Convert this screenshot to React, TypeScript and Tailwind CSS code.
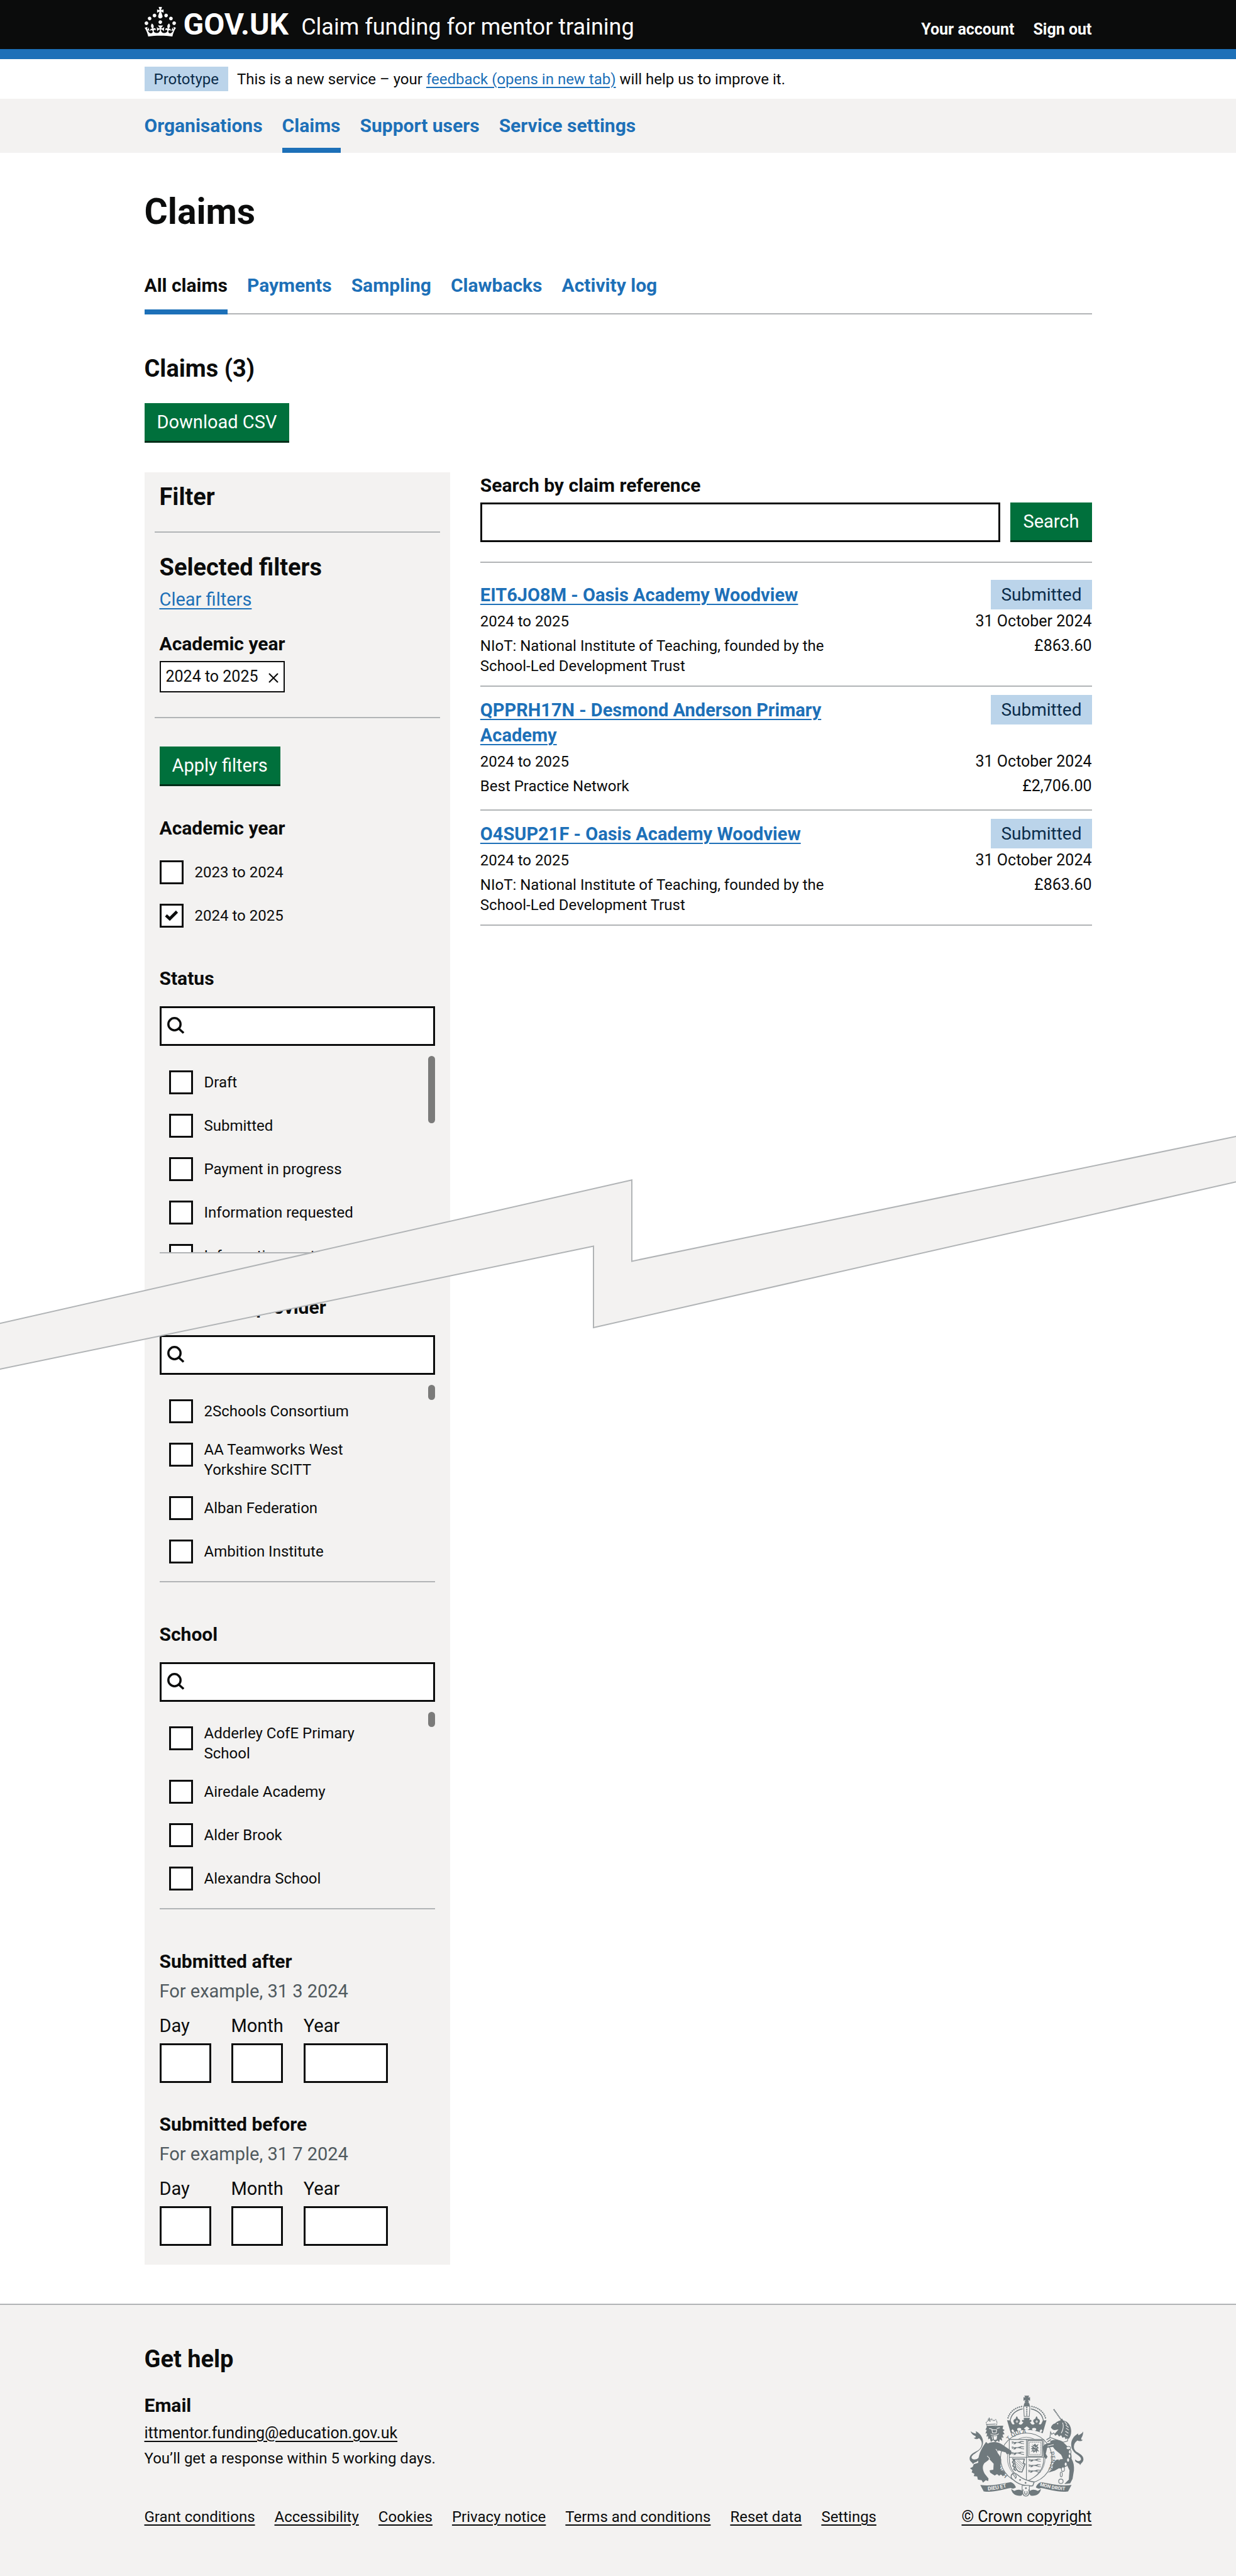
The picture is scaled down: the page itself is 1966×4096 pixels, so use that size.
import React from "react";

const link = "text-[#1d70b8] underline decoration-2 underline-offset-4";
const darkLink = "text-[#0b0c0c] underline decoration-2 underline-offset-4";
const bold30 = "text-[30px] leading-10 font-bold";
const body = "text-[24px] leading-8";
const greenButton =
  "h-[63px] border-b-[3px] border-[#002d18] bg-[#00703c] px-5 text-[29px] leading-10 text-white cursor-pointer";
const tagStyle = "bg-[#bbd4ea] text-[#0c2d4a]";
const fieldStyle = "h-[63px] rounded-none border-[3px] border-[#0b0c0c] bg-white outline-none";

function Crown() {
  return (
    <svg className="h-[47px] w-[50px] shrink-0" viewBox="0 0 32 30" fill="currentColor" aria-hidden="true">
      <path d="M22.6 10.4c-1 .4-2-.1-2.4-1-.4-.9.1-2 1-2.4.9-.4 2 .1 2.4 1s-.1 2-1 2.4m-5.9 6.7c-.9.4-2-.1-2.4-1-.4-.9.1-2 1-2.4.9-.4 2 .1 2.4 1s-.1 2-1 2.4m10.8-3.7c-1 .4-2-.1-2.4-1-.4-.9.1-2 1-2.4.9-.4 2 .1 2.4 1s0 2-1 2.4m3.3 4.8c-1 .4-2-.1-2.4-1-.4-.9.1-2 1-2.4.9-.4 2 .1 2.4 1s-.1 2-1 2.4M17 4.7l2.3 1.2V2.5l-2.3.7-.2-.2.9-3h-3.4l.9 3-.2.2c-.1.1-2.3-.7-2.3-.7v3.4L15 4.7c.1.1.1.2.2.2l-1.3 4c-.1.2-.1.4-.1.6 0 1.1.8 2 1.9 2.2h.7c1-.2 1.9-1.1 1.9-2.1 0-.2 0-.4-.1-.6l-1.3-4c-.1-.2 0-.2.1-.3m-7.6 5.7c.9.4 2-.1 2.4-1 .4-.9-.1-2-1-2.4-.9-.4-2 .1-2.4 1s0 2 1 2.4m-5 3c.9.4 2-.1 2.4-1 .4-.9-.1-2-1-2.4-.9-.4-2 .1-2.4 1s.1 2 1 2.4m-3.2 4.8c.9.4 2-.1 2.4-1 .4-.9-.1-2-1-2.4-.9-.4-2 .1-2.4 1s0 2 1 2.4m14.8 11c4.4 0 8.6.3 12.3.8 1.1-4.5 2.4-7 3.7-8.8l-2.5-.9c.2 1.3.3 1.9 0 2.7-.4-.4-.8-1.1-1.1-2.3l-1.2 4c.7-.5 1.3-.8 2-.9-1.1 2.5-2.6 3.1-3.5 3-1.1-.2-1.7-1.2-1.5-2.1.3-1.2 1.5-1.5 2.1-.1 1.1-2.3-.8-3-2-2.3 1.9-1.9 2.1-3.5.6-5.6-2.1 1.6-2.1 3.2-1.2 5.5-1.2-1.4-3.2-.6-2.5 1.6.9-1.4 2.1-.5 1.9.8-.2 1.1-1.7 2.1-3.5 1.9-2.7-.2-2.9-2.1-2.9-3.6.7-.1 1.9.5 2.9 1.9l.4-4.3c-1.1 1.1-2.1 1.4-3.2 1.4.4-1.2 2.1-3 2.1-3h-5.4s1.7 1.9 2.1 3c-1.1 0-2.1-.2-3.2-1.4l.4 4.3c1-1.4 2.2-2 2.9-1.9-.1 1.5-.2 3.4-2.9 3.6-1.9.2-3.4-.8-3.5-1.9-.2-1.3 1-2.2 1.9-.8.7-2.3-1.2-3-2.5-1.6.9-2.2.9-3.9-1.2-5.5-1.5 2-1.3 3.7.6 5.6-1.2-.7-3.1 0-2 2.3.6-1.4 1.8-1.1 2.1.1.2.9-.3 1.9-1.5 2.1-.9.2-2.4-.5-3.5-3 .6 0 1.2.3 2 .9l-1.2-4c-.3 1.1-.7 1.9-1.1 2.3-.3-.8-.2-1.4 0-2.7l-2.9.9C1.3 23 2.6 25.5 3.7 30c3.7-.5 7.9-.8 12.3-.8" />
    </svg>
  );
}

function WalkingLion({ x, y }: { x: number; y: number }) {
  return (
    <g transform={`translate(${x} ${y})`}>
      <path
        d="M2 4l8-3 6 5 8-1 22-1 10-4 14 1 8 3-8 1-12 0-4 4 12 4 10 0-2 4-18-2-12-5-14 1-6 6-12 1 4-4 4-4-8 2-8 4 2-6 4-4-8 1z"
        fill="#6f797d"
      />
      <path d="M8 5l6 3M30 8l10-1M50 12l8 3" stroke="#f3f2f1" strokeWidth="2" fill="none" />
    </g>
  );
}

function RoyalArms() {
  const g = "#6f797d";
  const bg = "#f3f2f1";
  return (
    <svg className="h-[161px] w-[183px]" viewBox="190 92 669 590" fill="none" aria-hidden="true">
      {/* garter */}
      <ellipse cx="524" cy="457" rx="150" ry="146" fill={bg} stroke={g} strokeWidth="4" />
      <ellipse cx="524" cy="457" rx="110" ry="122" stroke={g} strokeWidth="3" />
      <path id="garter-left" d="M418 557A134 130 0 0 1 400 370" />
      <path id="garter-top" d="M400 392A134 130 0 0 1 648 392" />
      <path id="garter-right" d="M650 400A134 130 0 0 1 570 590" />
      <g fill={g} fontFamily="Roboto, sans-serif" fontSize="34" fontWeight="500">
        <text>
          <textPath href="#garter-left">HONI SO</textPath>
        </text>
        <text>
          <textPath href="#garter-top" startOffset="42">
            T QUI A
          </textPath>
        </text>
        <text>
          <textPath href="#garter-right" startOffset="24">
            PENSE
          </textPath>
        </text>
      </g>

      {/* crown */}
      <g fill={g}>
        <path d="M513 93h28l-5 12 10-4v22l-11-5 5 13h-26l5-13-11 5v-22l10 4z" />
        <circle cx="527" cy="147" r="17" />
      </g>
      <path d="M509 154h36l-3 60h-30z" fill={bg} stroke={g} strokeWidth="4" />
      <path d="M527 158v54" stroke={g} strokeWidth="8" strokeDasharray="6 5" />
      <path d="M497 156C456 164 424 190 416 230M557 156C598 164 630 190 638 230" stroke={g} strokeWidth="8" strokeLinecap="round" strokeDasharray="1 11" />
      <path d="M503 170C462 178 436 204 430 240M551 170C592 178 618 204 624 240" stroke={g} strokeWidth="5" />
      <path
        d="M412 236l20 2 7 14c3 9 11 11 17 6l-6-12c-3-10 4-16 12-18 1-7 3-11 7-15 4 5 6 9 7 15 9 2 15 9 11 18l-7 10c7 8 17 7 22-1l6-9c-7 2-11-3-9-9 4-5 10-4 12 0l-2-15h36l-3 15c3-5 9-5 12 0 3 6-2 11-9 9l6 9c5 8 15 9 22 1l-7-10c-4-9 2-16 11-18 1-6 3-10 7-15 4 4 6 8 7 15 8 2 15 8 12 18l-6 12c6 5 14 3 17-6l7-14 21-2-22 76c-60-26-126-26-186 0z"
        fill={g}
      />
      <g fill={bg}>
        <ellipse cx="483" cy="289" rx="12" ry="8" />
        <ellipse cx="570" cy="289" rx="12" ry="8" />
        <path d="M527 272l17 12-17 12-17-12zM444 288l10 12-8 9-9-13zM611 288l-10 12 8 9 9-13z" />
        <path d="M462 244l8-10 8 10-8 8zM577 244l8-10 8 10-8 8z" opacity=".7" />
      </g>

      {/* shield */}
      <path d="M425 348h201v112c0 62-38 106-100 132-62-26-101-70-101-132z" fill={bg} stroke={g} strokeWidth="4" />
      <path d="M525 348v242M425 452h201" stroke={g} strokeWidth="4" />
      <WalkingLion x={436} y={358} />
      <WalkingLion x={436} y={388} />
      <WalkingLion x={436} y={420} />
      <WalkingLion x={534} y={460} />
      <WalkingLion x={534} y={492} />
      <WalkingLion x={532} y={524} />
      <path d="M533 354h85v92h-85z" stroke={g} strokeWidth="5" />
      <path d="M542 364h67v72h-67z" stroke={g} strokeWidth="3" strokeDasharray="9 3" />
      <path d="M556 370l8 12 12-10 6 10 14-8-8 16 10 8-10 4 12 18-12-6-4 14-6-12-12 10-2-10-14 4 12-12-12-6 12-6-12-10 14 2z" fill={g} />
      <path d="M566 388l10 8M564 408l12 2M584 392l-4 8" stroke={bg} strokeWidth="4" />
      <path d="M455 462h58l-6 24 10 6-18 46-16-2c-16-8-24-24-24-44z" stroke={g} strokeWidth="6" />
      <path d="M462 478l40 38M462 490l34 34M468 470l40 36M478 468l32 28M466 504l24 24" stroke={g} strokeWidth="3" />
      <path d="M444 458l8 12-8 10 8 10-6 12 10 8-4 12 12 8" stroke={g} strokeWidth="7" />

      {/* buckle strap */}
      <path d="M436 560c4-16 22-20 34-8 30 26 66 40 100 44l-8 22c-40 4-86-8-112-34-10-6-16-12-14-24z" fill={bg} stroke={g} strokeWidth="5" />
      <path d="M500 616h42v30c-4 18-38 18-42 0z" fill={bg} stroke={g} strokeWidth="4" />
      <g fill={g}>
        <circle cx="488" cy="584" r="5" />
        <circle cx="520" cy="601" r="5" />
        <circle cx="522" cy="632" r="5" />
      </g>
      <path d="M446 550l16 22M456 552c14 4 12 22 2 24" stroke={g} strokeWidth="4" />

      {/* ribbon */}
      <path d="M256 613c60 8 116-4 178-16 18 6 24 18 30 30-12 8-22 10-30 4-50 8-100 28-158 20z" fill={g} />
      <path d="M788 613c-60 8-116-4-178-16-18 6-24 18-30 30 12 8 22 10 30 4 50 8 100 28 158 20z" fill={g} />
      <path d="M436 636c6 30 24 42 60 40l14-20c-16-18-34-20-56-8zM610 636c-6 30-24 42-60 40l-14-20c16-18 34-20 56-8z" fill={g} />
      <path d="M506 640c-8 20 0 38 16 38s24-18 16-38M516 650c-4 12 0 18 6 18s10-6 6-18" stroke={g} strokeWidth="5" fill={bg} />
      <path id="motto-left" d="M300 645c50-2 90-14 140-26" />
      <path id="motto-right" d="M602 618c50 14 100 26 164 27" />
      <g fill={bg} fontFamily="Roboto, sans-serif" fontSize="31" fontWeight="700">
        <text>
          <textPath href="#motto-left">DIEU ET</textPath>
        </text>
        <text fontSize="28">
          <textPath href="#motto-right">MON DROIT</textPath>
        </text>
      </g>

      {/* lion */}
      <path
        d="M214 492c-4-10-12-12-18-22-8-22 8-38 28-48 20-8 36-20 40-42 4-18-4-30-16-40-8 8-22 8-30-2 10 2 14-2 10-10-12-4-24-12-28-28 10 10 22 12 32 14l-2-14c18 8 40 30 42 58 2 34-18 54-42 68-14 10-28 18-24 32 8 12 30 8 44-6l-2 16c-12 12-20 14-28 16l-6 8z"
        fill={g}
      />
      <path
        d="M300 372c30-14 60-10 84 6l52 36 4 16-12 10-8-10-8 6-8-12-42-12-6 12c8 14 20 24 22 42l-6 50c4 14 14 18 26 18l2 16-14 10-10-8-10 8-12-10-14 8-26-16-4-14 22-4 2-34-24-26-30 22c-14 18-10 40 2 62l22 28-2 14-14-4-16 14-8-14-22-4-4-18-20-2 4-14-16-8 4-14-14-10 16-8 6-16 26-8c-2-40 14-78 46-122z"
        fill={g}
      />
      <path d="M296 444l14 14-6 18M346 404c10 4 8 20 18 22" stroke={bg} strokeWidth="4" />
      <path
        d="M296 272l-10 20 8 0-8 22 10-2-4 20 10-4 0 20 10-6 6 20 14-10 12 12 12-10 10 10 4-16 14 8-4-20 12 2-6-18 12-4-10-14 10-8-12-8 4-18-14 0z"
        fill={g}
      />
      <path d="M308 284l18 4M352 284l18 -4M324 292h28l-4 18h-20zM316 316c16 10 36 10 48-2M324 326l4 22M352 326l-2 22" stroke={bg} strokeWidth="4" />
      <path d="M332 328h20l-4 22h-12z" fill={bg} />
      <path d="M296 272l-6-22 12-14 12 6 8-14 12 12 12-8 8 14-4 26z" fill={bg} stroke={g} strokeWidth="4" strokeDasharray="7 3" />
      <path d="M308 220v22M300 230h16M292 262l54-4M294 272l54-4" stroke={g} strokeWidth="4" />

      {/* unicorn */}
      <path d="M684 172l44 62" stroke={g} strokeWidth="7" strokeDasharray="8 2" />
      <path
        d="M722 238l10-12 8 12c26 4 46 30 46 62 0 20-6 34-14 44-26-8-56-16-94-16l34-38c-12 2-24 6-34 0l-10-10c2-12 10-22 24-26 10-8 20-14 30-16z"
        fill={g}
      />
      <circle cx="707" cy="256" r="4" fill={bg} />
      <path d="M748 244l14 18M754 264l16 14M756 282l16 12M752 300l18 12M750 318l16 10M736 250c8 20 4 40-8 62" stroke={bg} strokeWidth="4" />
      <path d="M666 304l6 14 12-8 10 14 12-8 10 12 12-8 8 16 12-6 6 14 14-6-4 20-24 6-78-28z" fill={bg} stroke={g} strokeWidth="4" />
      <path d="M642 350l20-12M648 362l20-14" stroke={g} strokeWidth="5" />
      <path
        d="M838 498c4-12 14-14 18-26 6-22-10-36-28-46-18-8-28-20-26-40 2-16 10-24 20-32 10 6 24 6 32-4-10 2-12-4-8-12 6-8 10-20 10-36-8 12-18 18-28 22l-2-10c-20 10-38 32-40 58-2 34 16 52 38 66 14 10 22 18 18 30-8 10-22 8-34-4l2 12c10 10 18 10 24 14z"
        fill={g}
      />
      <path
        d="M664 358c30-16 62-8 84 14 26 22 44 56 40 88 12 20 16 44 14 68l-8 50-14 26-34 4 26-26 4-54-14-30-22 20-26-2-24 14-40 12 28-24c-2-20 6-44 24-52l36-4-10-24c-18-16-38-28-48-46l-34 4-8 36 10 16-8 14-14-14-6-58c10-14 24-20 44-22z"
        fill={g}
      />
      <path d="M648 386l36-8M732 448c-6 10-14 12-18 22" stroke={bg} strokeWidth="4" />
      <g fill={bg} stroke={g} strokeWidth="4">
        <ellipse cx="770" cy="398" rx="13" ry="9" />
        <ellipse cx="778" cy="420" rx="7" ry="12" />
        <ellipse cx="776" cy="445" rx="7" ry="12" />
        <ellipse cx="768" cy="468" rx="8" ry="12" />
        <ellipse cx="754" cy="492" rx="8" ry="12" />
        <ellipse cx="738" cy="522" rx="9" ry="13" />
        <ellipse cx="728" cy="552" rx="6" ry="14" />
        <circle cx="726" cy="592" r="13" />
      </g>
    </svg>
  );
}

function Checkbox({ label, checked = false }: { label: string; checked?: boolean }) {
  return (
    <label className="flex min-h-12 shrink-0 items-start gap-[18px]">
      <span className="relative mt-[5px] block size-[38px] shrink-0">
        <input
          type="checkbox"
          defaultChecked={checked}
          className="peer block size-[38px] appearance-none border-[3px] border-[#0b0c0c] bg-white"
        />
        <svg className="pointer-events-none absolute inset-0 hidden peer-checked:block" viewBox="0 0 38 38" fill="none" aria-hidden="true">
          <path d="M10 18.5l6 5.5L27.5 12.5" stroke="#0b0c0c" strokeWidth="4.6" />
        </svg>
      </span>
      <span className={`self-center ${body}`}>{label}</span>
    </label>
  );
}

function FilterList({ title, items, thumb }: { title: string; items: string[]; thumb: string }) {
  const id = title.toLowerCase().replace(/ /g, "-");
  return (
    <fieldset>
      <legend className={bold30}>{title}</legend>
      <div className="relative mt-6">
        <input id={`${id}-search`} type="text" aria-label={`Search ${title}`} className={`${fieldStyle} block w-full pl-12 pr-3 text-[24px]`} />
        <svg className="absolute left-3 top-[17px] size-[27px]" viewBox="0 0 27 27" fill="none" stroke="#0b0c0c" strokeWidth="3.5" aria-hidden="true">
          <circle cx="11.5" cy="11.5" r="9.7" />
          <path d="M18 18.2l8 7.3" />
        </svg>
      </div>
      <div className="relative mt-3 h-[318px] overflow-hidden border-b-2 border-[#b1b4b6]">
        <div className="flex flex-col gap-[21px] pl-[15px] pr-20 pt-[22px]">
          {items.map((item) => (
            <Checkbox key={item} label={item} />
          ))}
        </div>
        <div className={`absolute right-0 top-1 w-[11px] rounded-full bg-[#7b7b7a] ${thumb}`} />
      </div>
    </fieldset>
  );
}

function DateGroup({ title, hint }: { title: string; hint: string }) {
  const id = title.toLowerCase().replace(/ /g, "-");
  const parts = [
    { name: "Day", width: "w-[82px]" },
    { name: "Month", width: "w-[82px]" },
    { name: "Year", width: "w-[134px]" },
  ];
  return (
    <fieldset>
      <legend className={bold30}>{title}</legend>
      <p className="mt-[7px] text-[29px] leading-10 text-[#505a5f]">{hint}</p>
      <div className="mt-[15px] flex gap-8">
        {parts.map((part) => (
          <div key={part.name} className="flex flex-col gap-2">
            <label htmlFor={`${id}-${part.name}`} className="text-[29px] leading-10">
              {part.name}
            </label>
            <input id={`${id}-${part.name}`} type="text" inputMode="numeric" className={`${fieldStyle} ${part.width} px-2 text-[29px]`} />
          </div>
        ))}
      </div>
    </fieldset>
  );
}

const claims = [
  {
    title: "EIT6JO8M - Oasis Academy Woodview",
    year: "2024 to 2025",
    provider: "NIoT: National Institute of Teaching, founded by the School-Led Development Trust",
    date: "31 October 2024",
    amount: "£863.60",
  },
  {
    title: "QPPRH17N - Desmond Anderson Primary Academy",
    year: "2024 to 2025",
    provider: "Best Practice Network",
    date: "31 October 2024",
    amount: "£2,706.00",
  },
  {
    title: "O4SUP21F - Oasis Academy Woodview",
    year: "2024 to 2025",
    provider: "NIoT: National Institute of Teaching, founded by the School-Led Development Trust",
    date: "31 October 2024",
    amount: "£863.60",
  },
];

function Container({ children, className = "" }: { children: React.ReactNode; className?: string }) {
  return <div className={`mx-auto w-full max-w-[1507px] ${className}`}>{children}</div>;
}

function Header() {
  return (
    <header className="border-b-[16px] border-[#1d70b8] bg-[#0b0c0c] text-white">
      <Container className="flex h-[78px] items-start pt-[11px]">
        <Crown />
        <div className="mt-1 flex grow items-baseline">
          <a href="#" className="ml-3 text-[48px] leading-[48px] font-bold">
            GOV.UK
          </a>
          <a href="#" className="ml-5 text-[36px] leading-[48px]">
            Claim funding for mentor training
          </a>
          <nav className="ml-auto flex gap-[30px] text-[25px] leading-8 font-bold">
            <a href="#">Your account</a>
            <a href="#">Sign out</a>
          </nav>
        </div>
      </Container>
    </header>
  );
}

function Filters() {
  return (
    <form className="self-start bg-[#f3f2f1] pb-[30px] pt-[15px]">
      <div className="mx-4 border-b-2 border-[#b1b4b6] px-2 pb-[31px]">
        <h2 className="text-[38px] leading-[48px] font-bold">Filter</h2>
      </div>
      <div className="mx-4 border-b-2 border-[#b1b4b6] px-2 pb-[39px] pt-[31px]">
        <h2 className="text-[38px] leading-[48px] font-bold">Selected filters</h2>
        <a href="#" className={`mt-[7px] block w-fit text-[29px] leading-10 ${link}`}>
          Clear filters
        </a>
        <h3 className={`mt-[31px] ${bold30}`}>Academic year</h3>
        <button type="button" className="mt-[7px] flex h-[50px] items-center gap-4 border-2 border-[#0b0c0c] bg-white px-2 text-[25px] leading-8">
          2024 to 2025
          <svg className="mt-1 size-4" viewBox="0 0 16 16" stroke="#0b0c0c" strokeWidth="2.2" aria-hidden="true">
            <path d="M1 1l14 14M15 1L1 15" />
          </svg>
        </button>
      </div>
      <div className="px-6 pt-[45px]">
        <button type="button" className={greenButton}>
          Apply filters
        </button>
        <fieldset className="mt-[47px]">
          <legend className={bold30}>Academic year</legend>
          <div className="mt-[26px] flex flex-col gap-[21px]">
            <Checkbox label="2023 to 2024" />
            <Checkbox label="2024 to 2025" checked />
          </div>
        </fieldset>
        <div className="mt-14 flex flex-col gap-[63px]">
          <div className="pb-[3px]">
            <FilterList
              title="Status"
              thumb="h-[107px]"
              items={["Draft", "Submitted", "Payment in progress", "Information requested", "Information sent"]}
            />
          </div>
          <FilterList
            title="Accredited provider"
            thumb="h-6"
            items={["2Schools Consortium", "AA Teamworks West Yorkshire SCITT", "Alban Federation", "Ambition Institute"]}
          />
          <FilterList
            title="School"
            thumb="h-6"
            items={["Adderley CofE Primary School", "Airedale Academy", "Alder Brook", "Alexandra School"]}
          />
          <div className="flex flex-col gap-[46px]">
            <DateGroup title="Submitted after" hint="For example, 31 3 2024" />
            <DateGroup title="Submitted before" hint="For example, 31 7 2024" />
          </div>
        </div>
      </div>
    </form>
  );
}

function Results() {
  return (
    <section className="pt-px">
      <label htmlFor="claim-search" className={`block ${bold30}`}>
        Search by claim reference
      </label>
      <div className="mt-[7px] flex gap-4">
        <input id="claim-search" type="search" className={`${fieldStyle} min-w-0 grow px-2 text-[29px]`} />
        <button type="button" className={greenButton}>
          Search
        </button>
      </div>
      <ul className="mt-[31px] border-t-2 border-[#b1b4b6] pt-3.5">
        {claims.map((claim) => (
          <li key={claim.title} className="grid grid-cols-[2fr_1fr] border-b-2 border-[#b1b4b6] pt-[13px]">
            <h3 className="max-w-[600px] pb-1.5 pt-1 text-[29px] leading-10 font-bold">
              <a href="#" className={link}>
                {claim.title}
              </a>
            </h3>
            <div className="text-right">
              <strong className={`inline-flex h-[47px] items-center px-4 text-[28px] font-normal ${tagStyle}`}>Submitted</strong>
            </div>
            <p className={`pb-[7px] ${body}`}>{claim.year}</p>
            <p className="pb-[7px] text-right text-[25px] leading-8">{claim.date}</p>
            <p className={`min-h-[53px] max-w-[600px] pb-[15px] ${body}`}>{claim.provider}</p>
            <p className="text-right text-[25px] leading-8">{claim.amount}</p>
          </li>
        ))}
      </ul>
    </section>
  );
}

export default function App() {
  const services = ["Organisations", "Claims", "Support users", "Service settings"];
  const tabs = ["All claims", "Payments", "Sampling", "Clawbacks", "Activity log"];
  const footerLinks = [
    "Grant conditions",
    "Accessibility",
    "Cookies",
    "Privacy notice",
    "Terms and conditions",
    "Reset data",
    "Settings",
  ];
  return (
    <div className="min-h-screen overflow-x-hidden bg-white font-[Roboto,sans-serif] text-[#0b0c0c]">
      <Header />
      <Container className={`flex h-[63px] items-center gap-3.5 ${body}`}>
        <strong className={`flex h-[39px] items-center px-[15px] font-normal ${tagStyle}`}>Prototype</strong>
        <span>
          This is a new service – your{" "}
          <a href="#" className={link}>
            feedback (opens in new tab)
          </a>{" "}
          will help us to improve it.
        </span>
      </Container>
      <nav className="bg-[#f3f2f1]">
        <Container className={`flex h-[86px] gap-[31px] ${bold30} text-[#1d70b8]`}>
          {services.map((item) => (
            <a
              key={item}
              href="#"
              className={`flex items-center border-y-8 border-t-transparent ${item === "Claims" ? "border-b-[#1d70b8]" : "border-b-transparent"}`}
            >
              {item}
            </a>
          ))}
        </Container>
      </nav>

      <main className="relative">
        <Container className="pt-[62px]">
          <h1 className="text-[57px] leading-[64px] font-bold">Claims</h1>
          <nav className={`mt-[65px] flex gap-[31px] shadow-[inset_0_-2px_0_#b1b4b6] ${bold30}`}>
            {tabs.map((tab) => (
              <a
                key={tab}
                href="#"
                className={`pb-[18px] ${tab === "All claims" ? "border-b-8 border-[#1d70b8]" : "mb-2 text-[#1d70b8]"}`}
              >
                {tab}
              </a>
            ))}
          </nav>
          <h2 className="mt-[62px] text-[38px] leading-[48px] font-bold">Claims (3)</h2>
          <button type="button" className={`mt-[31px] ${greenButton}`}>
            Download CSV
          </button>
          <div className="mt-[47px] grid grid-cols-[1fr_2fr] gap-12">
            <Filters />
            <Results />
          </div>
        </Container>

        <svg
          className="pointer-events-none absolute left-0 top-[1562px] h-[374px] w-full"
          viewBox="0 0 1966 374"
          preserveAspectRatio="none"
          aria-hidden="true"
        >
          <path
            d="M-10 301.6L1005 71.3V200.4L1976 0V72L944 306V176.5L-10 374z"
            fill="#f3f2f1"
            stroke="#b1b4b6"
            strokeWidth="2"
          />
        </svg>
      </main>

      <footer className="mt-[62px] border-t-2 border-[#b1b4b6] bg-[#f3f2f1] pb-[78px] pt-[62px]">
        <Container className="flex items-end justify-between">
          <div>
            <h2 className="text-[38px] leading-[48px] font-bold">Get help</h2>
            <h3 className={`mt-[30px] ${bold30}`}>Email</h3>
            <a href="mailto:ittmentor.funding@education.gov.uk" className={`mt-2 block w-fit text-[25px] leading-8 ${darkLink}`}>
              ittmentor.funding@education.gov.uk
            </a>
            <p className={`mt-2 ${body}`}>You’ll get a response within 5 working days.</p>
            <ul className={`mt-[61px] flex gap-[31px] ${body}`}>
              {footerLinks.map((item) => (
                <li key={item}>
                  <a href="#" className={darkLink}>
                    {item}
                  </a>
                </li>
              ))}
            </ul>
          </div>
          <div className="flex flex-col items-center gap-4">
            <RoyalArms />
            <a href="#" className={`text-[25px] leading-8 ${darkLink}`}>
              © Crown copyright
            </a>
          </div>
        </Container>
      </footer>
    </div>
  );
}
